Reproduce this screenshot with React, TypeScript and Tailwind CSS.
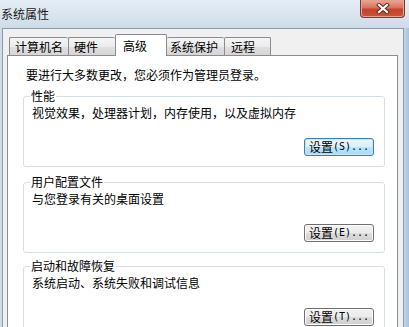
import React from "react";

const tabs = [
  { label: "计算机名", w: "w-[59px]", pl: "pl-[5px]", cls: "border-l" },
  { label: "硬件", w: "w-[47px]", pl: "pl-[5px]", cls: "border-l" },
  { label: "高级", w: "w-[52px]", pl: "pl-[7px]", cls: "", selected: true },
  { label: "系统保护", w: "w-[57px]", pl: "pl-[3px]", cls: "" },
  { label: "远程", w: "w-[47px]", pl: "pl-[6px]", cls: "border-x" },
];

function WinButton({ label, hotkey, isDefault }: { label: string; hotkey: string; isDefault?: boolean }) {
  return (
    <button
      className={
        "w-[70px] h-[18px] rounded-[3px] border flex items-center justify-center text-black " +
        (isDefault
          ? "border-[#3c7fb1] bg-[linear-gradient(#eaf6fd_0%,#d9f0fc_50%,#bee6fd_50%,#a7d9f5_100%)] shadow-[inset_0_0_0_1px_#c5e6f8]"
          : "border-[#707070] bg-[linear-gradient(#f2f2f2_0%,#ebebeb_50%,#dddddd_50%,#cfcfcf_100%)] shadow-[inset_0_0_0_1px_#fcfcfc]")
      }
    >
      <span className="text-[12px] leading-[14px]">{label}</span>
      <span className="font-['DejaVu_Sans_Mono',monospace] text-[10px] leading-[14px]">({hotkey})...</span>
    </button>
  );
}

function Group({ title, desc, label, hotkey, isDefault, className = "" }: { title: string; desc: string; label: string; hotkey: string; isDefault?: boolean; className?: string }) {
  return (
    <fieldset className={"ml-[15px] mr-[12px] border border-[#d5dfe5] rounded-[3px] " + className}>
      <legend className="ml-[6px] px-[1px] text-[12px] leading-[14px] text-black">{title}</legend>
      <div className="pl-[8px] pr-[10px] pt-[3px] pb-[10px]">
        <div className="text-[12px] leading-[14px] text-black">{desc}</div>
        <div className="flex justify-end mt-[18px]">
          <WinButton label={label} hotkey={hotkey} isDefault={isDefault} />
        </div>
      </div>
    </fieldset>
  );
}

export default function App() {
  return (
    <div className="w-[409px] h-[327px] overflow-hidden bg-[#f0f0f0] font-['Noto_Sans_CJK_SC','Noto_Sans',sans-serif]">
      {/* title bar */}
      <div className="h-[28px] flex justify-between items-start bg-[linear-gradient(180deg,#e6edf5_0%,#dce6f0_45%,#cddbe9_100%)]">
        <div className="pl-[1px] pt-[7px] text-[12px] leading-[14px] text-[#1a1a1a]">系统属性</div>
        <div className="mr-[4px] w-[45px] h-[18px] rounded-b-[4px] border border-t-0 border-[#7c3a30] bg-[linear-gradient(180deg,#e9a99a_0%,#d9725c_45%,#c4432b_55%,#c8543c_100%)] shadow-[inset_0_0_0_1px_#e8a090] flex items-center justify-center">
          <svg width="14" height="11" viewBox="0 0 14 11">
            <path d="M3 2 L11 9 M11 2 L3 9" stroke="#5a2a22" strokeWidth="4" strokeLinecap="square" />
            <path d="M3 2 L11 9 M11 2 L3 9" stroke="#ffffff" strokeWidth="2.2" strokeLinecap="square" />
          </svg>
        </div>
      </div>
      {/* body */}
      <div className="flex items-stretch">
        <div className="w-[2px] bg-[#cfdbe8] shrink-0" />
        <div className="flex-1 border-x border-t border-[#8c9aab] bg-[#f0f0f0] pl-[4px] pr-[5px] pt-[5px]">
          {/* tab strip */}
          <div className="relative z-10 flex items-end h-[21px] pl-[2px]">
            {tabs.map((t) =>
              t.selected ? (
                <div
                  key={t.label}
                  className={`${t.w} ${t.pl} h-[22px] -mb-px bg-white border-x border-t border-[#898c95] rounded-t-[2px] flex items-center text-[12px] leading-[14px] text-black`}
                >
                  {t.label}
                </div>
              ) : (
                <div
                  key={t.label}
                  className={`${t.w} ${t.pl} ${t.cls} h-[18px] border-t border-[#898c95] rounded-t-[2px] bg-[linear-gradient(180deg,#f5f5f5_0%,#ececec_50%,#e0e0e0_51%,#d6d6d6_100%)] flex items-center pt-[1px] text-[12px] leading-[14px] text-black`}
                >
                  {t.label}
                </div>
              )
            )}
          </div>
          {/* panel */}
          <div className="border border-[#898c95] bg-white pt-[12px] pb-[20px]">
            <div className="pl-[18px] text-[12px] leading-[14px] text-black">要进行大多数更改，您必须作为管理员登录。</div>
            <Group className="mt-[7px]" title="性能" desc="视觉效果，处理器计划，内存使用，以及虚拟内存" label="设置" hotkey="S" isDefault />
            <Group className="mt-[8px]" title="用户配置文件" desc="与您登录有关的桌面设置" label="设置" hotkey="E" />
            <Group className="mt-[6px]" title="启动和故障恢复" desc="系统启动、系统失败和调试信息" label="设置" hotkey="T" />
          </div>
        </div>
        <div className="w-[5px] shrink-0 bg-[linear-gradient(90deg,#c3d4e6,#a9c1da)]" />
      </div>
    </div>
  );
}
